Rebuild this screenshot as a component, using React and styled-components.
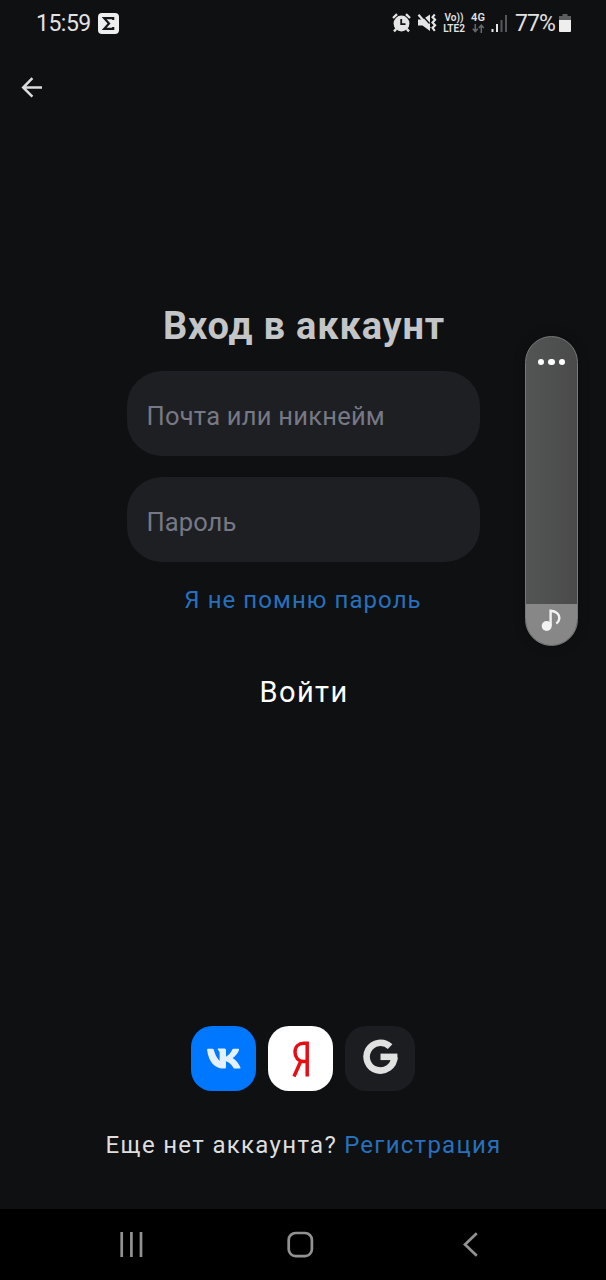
import React from "react";
import styled, { createGlobalStyle } from "styled-components";

const Global = createGlobalStyle`
  * { box-sizing: border-box; }
  body { margin: 0; background: #0e1012; }
  button, input { font: inherit; border: 0; padding: 0; margin: 0; background: none; color: inherit; }
`;

const Screen = styled.div`
  position: relative;
  width: 606px;
  height: 1280px;
  overflow: hidden;
  display: flex;
  flex-direction: column;
  background: #0e1012;
  color: #dedede;
  font-family: Roboto, "Noto Sans", sans-serif;
`;

const Icon = styled.svg`
  display: block;
  flex: none;
  margin-left: ${(p) => p.$before || 0}px;
  margin-right: ${(p) => p.$after || 0}px;
`;

const StatusBar = styled.header`
  height: 46px;
  padding: 0 35px 0 36px;
  display: flex;
  align-items: center;
  justify-content: space-between;
`;

const StatusGroup = styled.div`
  display: flex;
  align-items: center;
`;

const StatusText = styled.span`
  padding-top: 2px;
  font-size: 23px;
  line-height: 28px;
  letter-spacing: ${(p) => p.$spacing || 0}px;
  margin-right: ${(p) => p.$after}px;
  color: #e2e2e2;
  white-space: nowrap;
`;

const NetworkLabel = styled.span`
  display: flex;
  flex-direction: column;
  align-items: center;
  gap: 1px;
  width: ${(p) => p.$width}px;
  margin-left: ${(p) => p.$before}px;
  font-size: ${(p) => p.$size}px;
  font-weight: 600;
  line-height: 10px;
  white-space: nowrap;
  color: #e2e2e2;
`;

const NetworkLine = styled.span`
  display: block;
  height: 10px;
  line-height: 10px;
`;

const AppBar = styled.div`
  height: 82px;
  padding: 30px 20px;
`;

const BackButton = styled.button`
  display: block;
`;

const Form = styled.form`
  width: 353px;
  margin: 173px auto 0;
  display: flex;
  flex-direction: column;
  align-items: center;
`;

const Title = styled.h1`
  margin: 0 0 20px;
  padding-left: 2px;
  font-size: 38px;
  font-weight: 700;
  line-height: 50px;
  letter-spacing: 0.82px;
  white-space: nowrap;
  color: #c4c5c7;
`;

const Field = styled.input`
  width: 100%;
  height: 85px;
  margin-bottom: 21px;
  padding: 4px 20px 0 !important;
  border-radius: 35px;
  background: #1e1f23 !important;
  color: #dedede;
  font-size: 25.5px !important;
  letter-spacing: ${(p) => p.$spacing}px;
  outline: none;
  &::placeholder { color: #767985; opacity: 1; }
`;

const TextLink = styled.a`
  color: #2870bd;
  font-size: 24px;
  line-height: 34px;
  letter-spacing: ${(p) => p.$spacing}px;
  white-space: nowrap;
`;

const SubmitButton = styled.button`
  margin-top: 55px !important;
  padding-left: 2px !important;
  font-size: 29px !important;
  line-height: 40px !important;
  letter-spacing: 1.4px;
  color: #fff !important;
`;

const SocialRow = styled.div`
  margin-top: auto;
  display: flex;
  justify-content: center;
  gap: 12px;
`;

const SocialButton = styled.button`
  width: ${(p) => p.$width || 65}px;
  height: 65px;
  display: grid;
  place-items: center;
  padding-bottom: ${(p) => p.$lift || 0}px !important;
  border-radius: 21px;
  background: ${(p) => p.$fill} !important;
`;

const SignUp = styled.p`
  margin: 36px 0 46px;
  padding-left: 1px;
  display: flex;
  align-items: baseline;
  justify-content: center;
  gap: 7px;
  font-size: 24px;
  line-height: 36px;
  letter-spacing: 1.32px;
  white-space: nowrap;
`;

const NavBar = styled.nav`
  height: 71px;
  padding: 0 127px 0 119px;
  display: flex;
  align-items: center;
  justify-content: space-between;
  background: #000;
`;

const VolumeSlider = styled.div`
  position: absolute;
  left: 525px;
  top: 336px;
  width: 53px;
  height: 310px;
  overflow: hidden;
  display: flex;
  flex-direction: column;
  justify-content: space-between;
  border: 1.5px solid #777978;
  border-radius: 27px;
  background: linear-gradient(90deg, #535554, #4a4a4a);
  box-shadow: 0 0 12px rgba(0, 0, 0, 0.25);
`;

const Dots = styled.div`
  display: flex;
  justify-content: center;
  gap: 4px;
  padding-top: 22px;
`;

const Dot = styled.i`
  width: 6.4px;
  height: 6.4px;
  border-radius: 50%;
  background: #fff;
`;

const VolumeLevel = styled.div`
  height: 41px;
  display: flex;
  justify-content: center;
  padding: 5px 2px 0 0;
  background: #878787;
`;

const SigmaIcon = () => (
  <Icon width="21" height="21" viewBox="0 0 21 21">
    <rect width="21" height="21" rx="4" fill="#eee" />
    <path d="M15.2 7V5.2H6.2L11 10.4 6.2 15.8h9V14" fill="none" stroke="#15171a" strokeWidth="2.2" />
  </Icon>
);

const AlarmIcon = () => (
  <Icon width="19" height="20" viewBox="0 0 19 20">
    <circle cx="9.5" cy="10.5" r="7.9" fill="#e5e5e5" />
    <path d="M1 5 5 1.2M18 5l-4-3.8M4.3 15.9 2 18.4M14.7 15.9l2.3 2.5" stroke="#e5e5e5" strokeWidth="2.3" />
    <path d="M9.2 6v5.2h4.3" fill="none" stroke="#111315" strokeWidth="1.8" />
  </Icon>
);

const MuteIcon = () => (
  <Icon $before={6} width="20" height="20" viewBox="0 0 20 20">
    <path d="M1 6.5h4.5L13 1.5V18l-7.5-5.5H1z" fill="#e5e5e5" />
    <path d="m4 1.2 8.5 9.3" stroke="#0e1012" strokeWidth="1.4" />
    <path d="m1.5 1.8 11.5 13.5" stroke="#e5e5e5" strokeWidth="2.2" />
    <path d="m17.8 1.5-2.3 2.6 2.6 2.7-2.6 2.7 2.6 2.7-2.6 2.7 2.3 3" fill="none" stroke="#e5e5e5" strokeWidth="2.1" />
  </Icon>
);

const DataArrows = () => (
  <Icon width="13" height="9" viewBox="0 0 13 9">
    <path d="M3.3 0v7M.8 4.7l2.5 2.8 2.5-2.8M9.3 9V1.5M6.8 4l2.5-2.8L11.8 4" fill="none" stroke="#66686a" strokeWidth="1.5" />
  </Icon>
);

const SignalIcon = () => (
  <Icon $before={6} $after={7} width="17" height="17" viewBox="0 0 17 17">
    <path d="M.5 14h2v3h-2zM5 9h2v8H5z" fill="#e5e5e5" />
    <path d="M9.5 5h2v12h-2zM14 0h2v17h-2z" fill="#55575a" />
  </Icon>
);

const BatteryIcon = () => (
  <Icon width="12" height="18" viewBox="0 0 12 18">
    <path d="M3.5 0h5v2H12v4H0V2h3.5z" fill="#5b5d5f" />
    <path d="M0 6h12v11a1 1 0 0 1-1 1H1a1 1 0 0 1-1-1z" fill="#eee" />
  </Icon>
);

const BackArrow = () => (
  <Icon width="24" height="22" viewBox="0 0 24 22">
    <path d="M22 11.5H3.5M12.4 2.2 3.2 11.5l9.2 9.2" fill="none" stroke="#dcdcdc" strokeWidth="2.5" />
  </Icon>
);

const NoteIcon = () => (
  <Icon width="20" height="23" viewBox="0 0 20 23">
    <circle cx="5.7" cy="17" r="5" fill="#f2f2f2" />
    <path d="M9.6 17V1.8c5.6.2 9.6 4 8.5 8.6-.4 1.9-1.5 3.2-2.8 4.2" fill="none" stroke="#f2f2f2" strokeWidth="2.4" />
  </Icon>
);

const VkLogo = () => (
  <Icon width="34" height="21" viewBox="0 0 34 21">
    <path
      fill="#e3f0ff"
      d="M1 .8h4.6q.9 0 1.2 1C8 6.500 9.800 10 12.600 13V5.200C12.600 3.500 11.800 2.700 11 1.800 10.500 1.200 10.800.6 11.600.6h6q1.400 0 1.400 1.500v6.600c2.900-1.300 4.800-4.200 6.300-7.100q.4-.8 1.300-.8h4.700q1.100 0 .7 1.100C31 5.400 28.300 8 25.700 10c3.300 2.200 6 5.300 7.700 9.300q.5 1.300-.9 1.300h-4.700q-.9 0-1.400-.9c-1.800-3.300-4.200-5.500-7.400-6.500v6q0 1.400-1.400 1.400C7.900 20.600 1.600 14 .1 1.900Q0 .8 1 .8z"
    />
  </Icon>
);

const YandexLogo = () => (
  <Icon width="19" height="36" viewBox="0 0 19 36">
    <path d="M16.2 35.5V2.300h-3.500C7.600 2.300 4 5.600 4 11.100c0 5.700 3.600 9.400 8.400 9.400h3.800M10 19.800 3 35.500" fill="none" stroke="#e80d12" strokeWidth="3.5" />
  </Icon>
);

const GoogleLogo = () => (
  <Icon width="35" height="35" viewBox="0 0 35 35">
    <path d="M27.1 7.6A13.9 13.9 0 1 0 31.4 18.2" fill="none" stroke="#e1e1e2" strokeWidth="6.6" />
    <path d="M17.5 14.6h16.9v6.5H17.5z" fill="#e1e1e2" />
  </Icon>
);

const RecentsIcon = () => (
  <Icon width="25" height="25" viewBox="0 0 25 25">
    <path d="M2.700 0v25M12.400 0v25M22 0v25" stroke="#929292" strokeWidth="2.7" />
  </Icon>
);

const HomeIcon = () => (
  <Icon $after={5} width="27" height="27" viewBox="0 0 27 27">
    <rect x="1.7" y="2" width="23.2" height="23.2" rx="7" fill="none" stroke="#929292" strokeWidth="2.7" />
  </Icon>
);

const NavBackIcon = () => (
  <Icon width="17" height="25" viewBox="0 0 17 25">
    <path d="M14.800 1.200 3 12.500l11.800 11.300" fill="none" stroke="#929292" strokeWidth="2.7" />
  </Icon>
);

export default function App() {
  return (
    <Screen>
      <Global />
      <StatusBar>
        <StatusGroup>
          <StatusText $after={7} $spacing={-0.5}>15:59</StatusText>
          <SigmaIcon />
        </StatusGroup>
        <StatusGroup>
          <AlarmIcon />
          <MuteIcon />
          <NetworkLabel $width={24} $before={5} $size={10}>
            <NetworkLine>Vo))</NetworkLine>
            <NetworkLine>LTE2</NetworkLine>
          </NetworkLabel>
          <NetworkLabel $width={14} $before={5} $size={11}>
            <NetworkLine>4G</NetworkLine>
            <DataArrows />
          </NetworkLabel>
          <SignalIcon />
          <StatusText $after={4} $spacing={-0.9}>77%</StatusText>
          <BatteryIcon />
        </StatusGroup>
      </StatusBar>
      <AppBar>
        <BackButton aria-label="Назад"><BackArrow /></BackButton>
      </AppBar>
      <Form onSubmit={(e) => e.preventDefault()}>
        <Title>Вход в аккаунт</Title>
        <Field placeholder="Почта или никнейм" $spacing={0.24} />
        <Field type="password" placeholder="Пароль" $spacing={0.1} />
        <TextLink $spacing={1.07}>Я не помню пароль</TextLink>
        <SubmitButton>Войти</SubmitButton>
      </Form>
      <SocialRow>
        <SocialButton $fill="#0077ff" aria-label="VK"><VkLogo /></SocialButton>
        <SocialButton $fill="#fff" aria-label="Yandex"><YandexLogo /></SocialButton>
        <SocialButton $fill="#1c1d21" $width={70} $lift={5} aria-label="Google"><GoogleLogo /></SocialButton>
      </SocialRow>
      <SignUp>
        <span>Еще нет аккаунта?</span>
        <TextLink $spacing={1.25}>Регистрация</TextLink>
      </SignUp>
      <NavBar>
        <RecentsIcon />
        <HomeIcon />
        <NavBackIcon />
      </NavBar>
      <VolumeSlider>
        <Dots><Dot /><Dot /><Dot /></Dots>
        <VolumeLevel><NoteIcon /></VolumeLevel>
      </VolumeSlider>
    </Screen>
  );
}
